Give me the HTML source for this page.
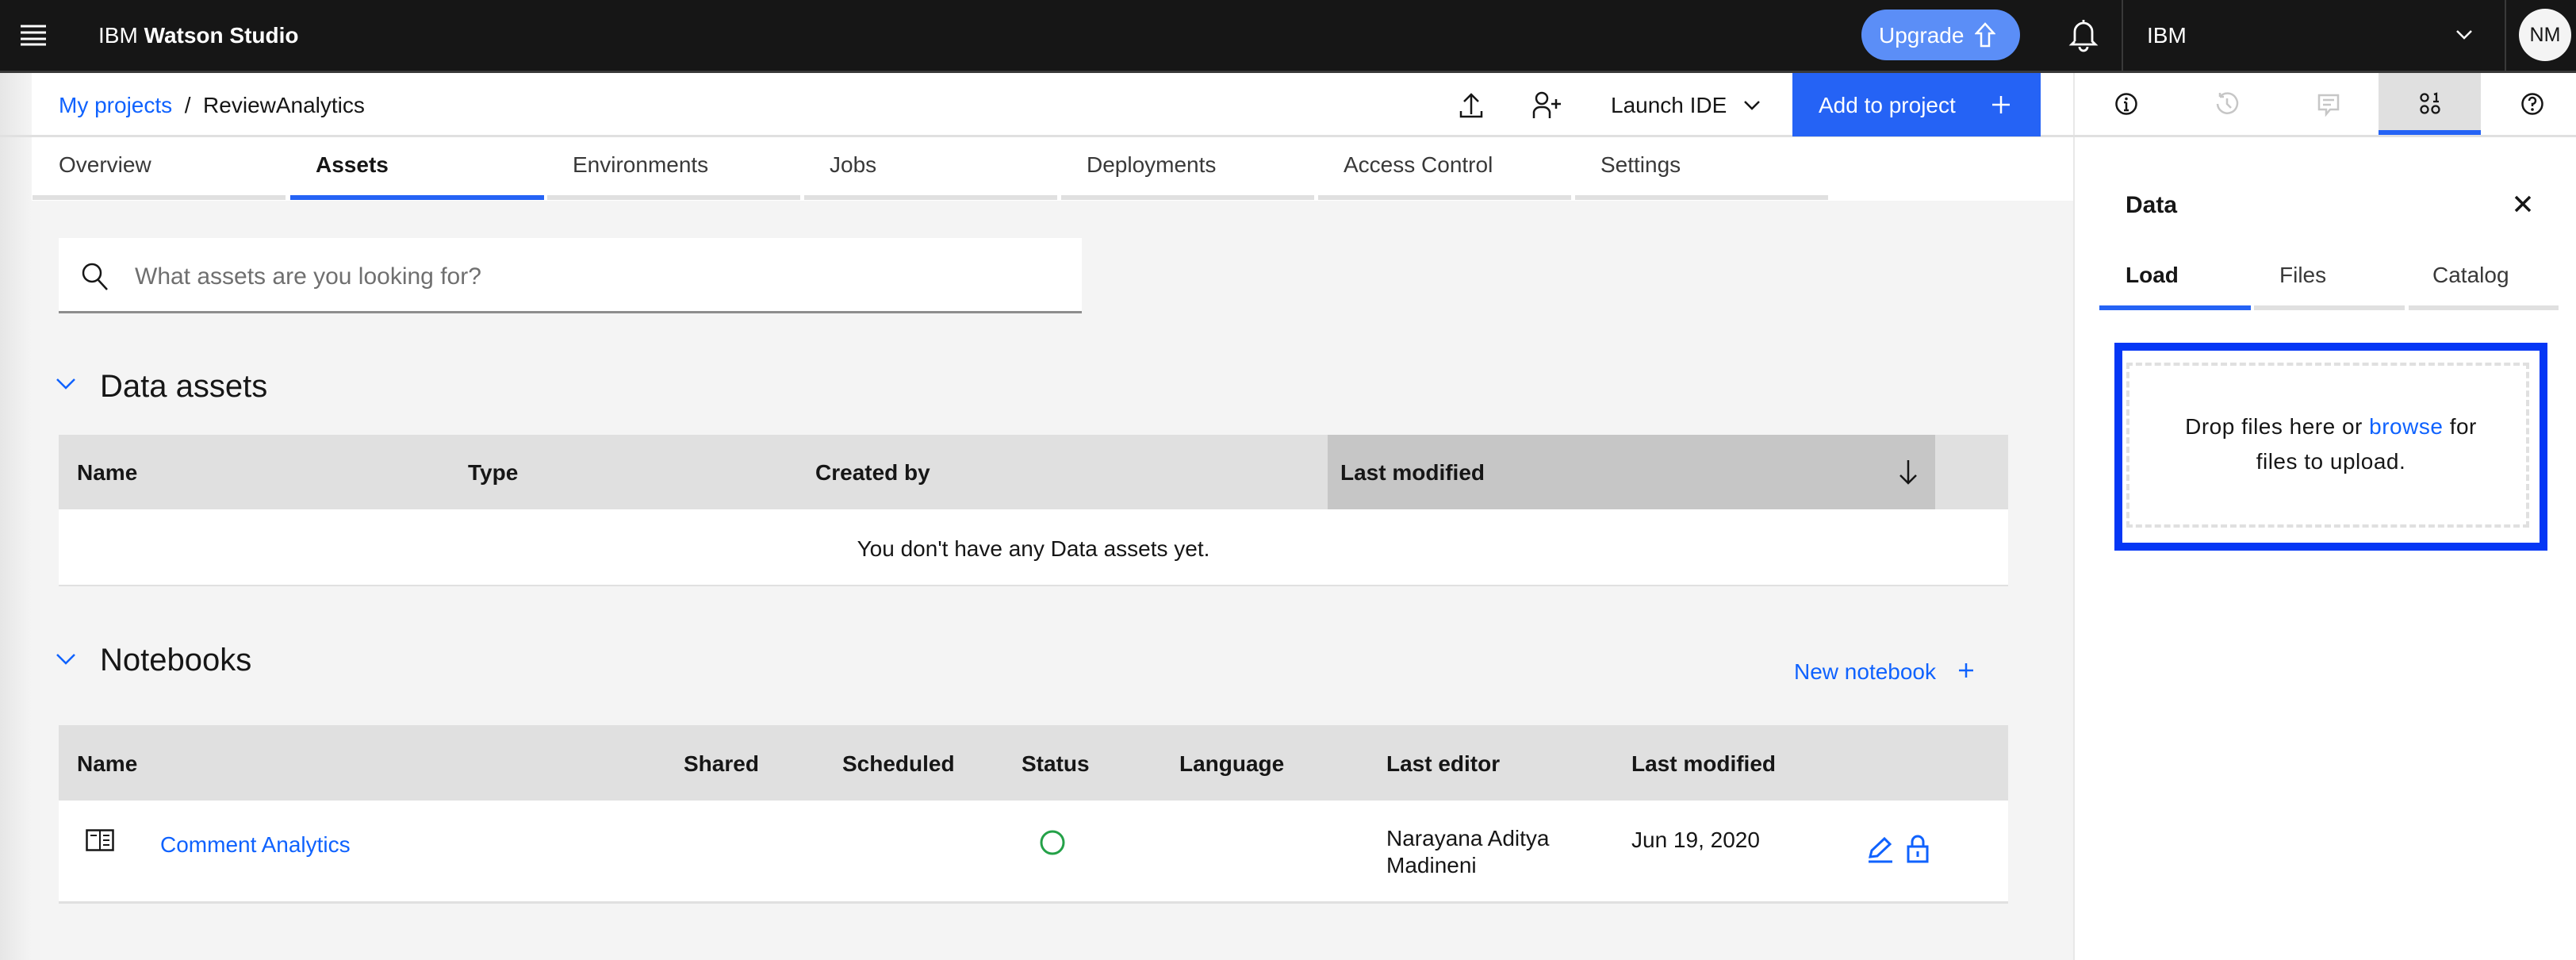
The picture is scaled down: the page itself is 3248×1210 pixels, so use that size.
<!DOCTYPE html>
<html><head><meta charset="utf-8"><style>
*{margin:0;padding:0;box-sizing:border-box}
body{width:3248px;height:1210px;overflow:hidden;background:#f4f4f4;font-family:"Liberation Sans",sans-serif;color:#161616;position:relative;font-size:28px}
.a{position:absolute;white-space:nowrap}
.b{font-weight:bold}
.blue{color:#0f62fe}
</style></head><body>
<div class="a" style="left:0;top:91px;width:40px;height:1119px;background:linear-gradient(90deg,#e6e6e6,#f4f4f4)"></div>
<div class="a" style="left:0;top:0;width:3248px;height:89px;background:#161616"></div>
<div class="a" style="left:0;top:89px;width:3248px;height:3px;background:#393939"></div>
<svg class="a" style="left:26px;top:30px" width="32" height="28"><g stroke="#fff" stroke-width="3"><line x1="0" y1="3" x2="32" y2="3"/><line x1="0" y1="11" x2="32" y2="11"/><line x1="0" y1="19" x2="32" y2="19"/><line x1="0" y1="26" x2="32" y2="26"/></g></svg>
<div class="a" style="left:124px;top:29px;color:#fff;font-size:28px">IBM <b>Watson Studio</b></div>
<div class="a" style="left:2347px;top:12px;width:200px;height:64px;border-radius:32px;background:#5b8ef7;color:#fff;font-size:28px;line-height:66px;padding-left:22px">Upgrade</div>
<svg class="a" style="left:2490px;top:28px" width="26" height="34"><path d="M13 2 L24 14 H18 V30 H8 V14 H2 Z" fill="none" stroke="#fff" stroke-width="2.5"/></svg>
<svg class="a" style="left:2608px;top:22px" width="38" height="44"><path d="M19 3 V7 M8 30 V18 A11 11 0 0 1 30 18 V30 L34 34 H4 L8 30 M14 37 A5 5 0 0 0 24 37" fill="none" stroke="#fff" stroke-width="2.8"/></svg>
<div class="a" style="left:2675px;top:0;width:2px;height:89px;background:#393939"></div>
<div class="a" style="left:2707px;top:29px;color:#fff">IBM</div>
<svg class="a" style="left:3096px;top:37px" width="22" height="14"><path d="M2 2 L11 11 L20 2" fill="none" stroke="#fff" stroke-width="2.5"/></svg>
<div class="a" style="left:3158px;top:0;width:2px;height:89px;background:#393939"></div>
<div class="a" style="left:3176px;top:11px;width:66px;height:66px;border-radius:50%;background:#f4f4f4;color:#161616;font-size:25px;text-align:center;line-height:66px">NM</div>
<div class="a" style="left:40px;top:92px;width:2574px;height:80px;background:#fff"></div>
<div class="a" style="left:0;top:170px;width:2614px;height:3px;background:#e0e0e0"></div>
<div class="a" style="left:74px;top:117px"><span class="blue">My projects</span> &nbsp;/&nbsp; ReviewAnalytics</div>
<svg class="a" style="left:1840px;top:116px" width="30" height="34"><path d="M15 28 V3 M6 12 L15 3 L24 12 M2 24 V31 H28 V24" fill="none" stroke="#161616" stroke-width="2.5"/></svg>
<svg class="a" style="left:1932px;top:115px" width="36" height="36"><circle cx="12" cy="9" r="7" fill="none" stroke="#161616" stroke-width="2.5"/><path d="M2 34 V26 A8 8 0 0 1 10 20 H14 A8 8 0 0 1 22 26 V34 M30 10 V22 M24 16 H36" fill="none" stroke="#161616" stroke-width="2.5"/></svg>
<div class="a" style="left:2031px;top:117px">Launch IDE</div>
<svg class="a" style="left:2198px;top:126px" width="22" height="14"><path d="M2 2 L11 11 L20 2" fill="none" stroke="#161616" stroke-width="2.5"/></svg>
<div class="a" style="left:2260px;top:92px;width:313px;height:80px;background:#2563f5;color:#fff;padding:25px 0 0 33px">Add to project</div>
<svg class="a" style="left:2512px;top:121px" width="22" height="22"><path d="M11 0 V22 M0 11 H22" stroke="#fff" stroke-width="2.5"/></svg>
<div class="a" style="left:40px;top:173px;width:2574px;height:80px;background:#fff"></div>
<div class="a" style="left:74px;top:192px;color:#393939">Overview</div>
<div class="a b" style="left:398px;top:192px">Assets</div>
<div class="a" style="left:722px;top:192px;color:#393939">Environments</div>
<div class="a" style="left:1046px;top:192px;color:#393939">Jobs</div>
<div class="a" style="left:1370px;top:192px;color:#393939">Deployments</div>
<div class="a" style="left:1694px;top:192px;color:#393939">Access Control</div>
<div class="a" style="left:2018px;top:192px;color:#393939">Settings</div>
<div class="a" style="left:41px;top:246px;width:319px;height:6px;background:#e0e0e0"></div>
<div class="a" style="left:366px;top:246px;width:320px;height:6px;background:#2563f5"></div>
<div class="a" style="left:690px;top:246px;width:319px;height:6px;background:#e0e0e0"></div>
<div class="a" style="left:1014px;top:246px;width:319px;height:6px;background:#e0e0e0"></div>
<div class="a" style="left:1338px;top:246px;width:319px;height:6px;background:#e0e0e0"></div>
<div class="a" style="left:1662px;top:246px;width:319px;height:6px;background:#e0e0e0"></div>
<div class="a" style="left:1986px;top:246px;width:319px;height:6px;background:#e0e0e0"></div>
<div class="a" style="left:74px;top:300px;width:1290px;height:95px;background:#fff;border-bottom:3px solid #8d8d8d"></div>
<svg class="a" style="left:102px;top:330px" width="36" height="38"><circle cx="14" cy="14" r="11" fill="none" stroke="#161616" stroke-width="2.5"/><path d="M22 23 L33 35" stroke="#161616" stroke-width="2.5"/></svg>
<div class="a" style="left:170px;top:332px;color:#6f6f6f;font-size:30px">What assets are you looking for?</div>
<svg class="a" style="left:70px;top:476px" width="26" height="16"><path d="M2 2 L13 13 L24 2" fill="none" stroke="#0f62fe" stroke-width="2.5"/></svg>
<div class="a" style="left:126px;top:465px;font-size:40px">Data assets</div>
<div class="a" style="left:74px;top:548px;width:2458px;height:94px;background:#e0e0e0"></div>
<div class="a" style="left:1674px;top:548px;width:766px;height:94px;background:#c6c6c6"></div>
<div class="a b" style="left:97px;top:580px">Name</div>
<div class="a b" style="left:590px;top:580px">Type</div>
<div class="a b" style="left:1028px;top:580px">Created by</div>
<div class="a b" style="left:1690px;top:580px">Last modified</div>
<svg class="a" style="left:2394px;top:578px" width="24" height="34"><path d="M12 2 V31 M2 21 L12 31 L22 21" fill="none" stroke="#161616" stroke-width="2.5"/></svg>
<div class="a" style="left:74px;top:642px;width:2458px;height:97px;background:#fff;border-bottom:2px solid #e0e0e0"></div>
<div class="a" style="left:74px;top:676px;width:2458px;text-align:center">You don't have any Data assets yet.</div>
<svg class="a" style="left:70px;top:823px" width="26" height="16"><path d="M2 2 L13 13 L24 2" fill="none" stroke="#0f62fe" stroke-width="2.5"/></svg>
<div class="a" style="left:126px;top:810px;font-size:40px">Notebooks</div>
<div class="a blue" style="left:2262px;top:831px">New notebook</div>
<svg class="a" style="left:2470px;top:836px" width="18" height="18"><path d="M9 0 V18 M0 9 H18" stroke="#0f62fe" stroke-width="2.5"/></svg>
<div class="a" style="left:74px;top:914px;width:2458px;height:95px;background:#e0e0e0"></div>
<div class="a b" style="left:97px;top:947px">Name</div>
<div class="a b" style="left:862px;top:947px">Shared</div>
<div class="a b" style="left:1062px;top:947px">Scheduled</div>
<div class="a b" style="left:1288px;top:947px">Status</div>
<div class="a b" style="left:1487px;top:947px">Language</div>
<div class="a b" style="left:1748px;top:947px">Last editor</div>
<div class="a b" style="left:2057px;top:947px">Last modified</div>
<div class="a" style="left:74px;top:1009px;width:2458px;height:130px;background:#fff;border-bottom:3px solid #e0e0e0"></div>
<svg class="a" style="left:108px;top:1045px" width="36" height="28"><rect x="1.5" y="1.5" width="33" height="25" fill="none" stroke="#161616" stroke-width="2.5"/><path d="M18 2 V27 M22 8 H30 M22 14 H30 M22 20 H30 M6 8 H14" stroke="#161616" stroke-width="2"/></svg>
<div class="a blue" style="left:202px;top:1049px">Comment Analytics</div>
<svg class="a" style="left:1310px;top:1045px" width="34" height="34"><circle cx="17" cy="17" r="14" fill="none" stroke="#24a148" stroke-width="3"/></svg>
<div class="a" style="left:1748px;top:1040px;line-height:34px">Narayana Aditya<br>Madineni</div>
<div class="a" style="left:2057px;top:1043px">Jun 19, 2020</div>
<svg class="a" style="left:2354px;top:1054px" width="34" height="34"><path d="M4 26 L6 18 L22 3 L29 10 L13 25 Z M2 32 H32" fill="none" stroke="#0f62fe" stroke-width="3"/></svg>
<svg class="a" style="left:2404px;top:1052px" width="28" height="36"><rect x="2" y="15" width="24" height="19" fill="none" stroke="#0f62fe" stroke-width="3"/><path d="M7 15 V9 A7 7 0 0 1 21 9 V15 M14 21 V28" fill="none" stroke="#0f62fe" stroke-width="3"/></svg>
<div class="a" style="left:2614px;top:92px;width:634px;height:1118px;background:#fff;border-left:2px solid #e8e8e8"></div>
<div class="a" style="left:2614px;top:170px;width:634px;height:3px;background:#e0e0e0"></div>
<div class="a" style="left:2999px;top:92px;width:129px;height:78px;background:#e0e0e0"></div>
<div class="a" style="left:2999px;top:164px;width:129px;height:6px;background:#2563f5"></div>
<svg class="a" style="left:2666px;top:116px" width="30" height="30"><circle cx="15" cy="15" r="12.5" fill="none" stroke="#161616" stroke-width="2.5"/><path d="M15 13 V23 M12 23 H18 M12 13 H15" stroke="#161616" stroke-width="2.5"/><circle cx="15" cy="8.5" r="1.8" fill="#161616"/></svg>
<svg class="a" style="left:2793px;top:116px" width="30" height="30"><path d="M6 6 A12.5 12.5 0 1 1 3 15 M6 6 V1 M6 6 H11 M15 8 V15 L20 20" fill="none" stroke="#c6c6c6" stroke-width="2.5"/></svg>
<svg class="a" style="left:2921px;top:117px" width="30" height="30"><path d="M3 3 H27 V21 H17 L12 27 V21 H3 Z M8 9 H22 M8 15 H18" fill="none" stroke="#c6c6c6" stroke-width="2.5"/></svg>
<svg class="a" style="left:3050px;top:116px" width="28" height="30"><circle cx="7" cy="7" r="4.5" fill="none" stroke="#161616" stroke-width="2.3"/><circle cx="7" cy="22" r="4.5" fill="none" stroke="#161616" stroke-width="2.3"/><circle cx="21" cy="22" r="4.5" fill="none" stroke="#161616" stroke-width="2.3"/><path d="M19 3 L22 2 V12 M18 12 H25" fill="none" stroke="#161616" stroke-width="2.3"/></svg>
<svg class="a" style="left:3178px;top:116px" width="30" height="30"><circle cx="15" cy="15" r="12.5" fill="none" stroke="#161616" stroke-width="2.5"/><path d="M11 11 A4 4 0 1 1 15 15 V18" fill="none" stroke="#161616" stroke-width="2.5"/><circle cx="15" cy="22" r="1.8" fill="#161616"/></svg>
<div class="a b" style="left:2680px;top:242px;font-size:30px">Data</div>
<svg class="a" style="left:3170px;top:246px" width="22" height="22"><path d="M2 2 L20 20 M20 2 L2 20" stroke="#161616" stroke-width="3.5"/></svg>
<div class="a b" style="left:2680px;top:331px">Load</div>
<div class="a" style="left:2874px;top:331px;color:#393939">Files</div>
<div class="a" style="left:3067px;top:331px;color:#393939">Catalog</div>
<div class="a" style="left:2647px;top:385px;width:191px;height:6px;background:#2563f5"></div>
<div class="a" style="left:2842px;top:385px;width:190px;height:6px;background:#e0e0e0"></div>
<div class="a" style="left:3037px;top:385px;width:189px;height:6px;background:#e0e0e0"></div>
<div class="a" style="left:2666px;top:432px;width:546px;height:262px;border:10px solid #0537f5;background:#fff"></div>
<div class="a" style="left:2681px;top:457px;width:508px;height:208px;border:4px dashed #e0e0e0"></div>
<div class="a" style="left:2666px;top:516px;width:546px;text-align:center;line-height:44px;letter-spacing:0.5px">Drop files here or <span class="blue">browse</span> for<br>files to upload.</div>
</body></html>
